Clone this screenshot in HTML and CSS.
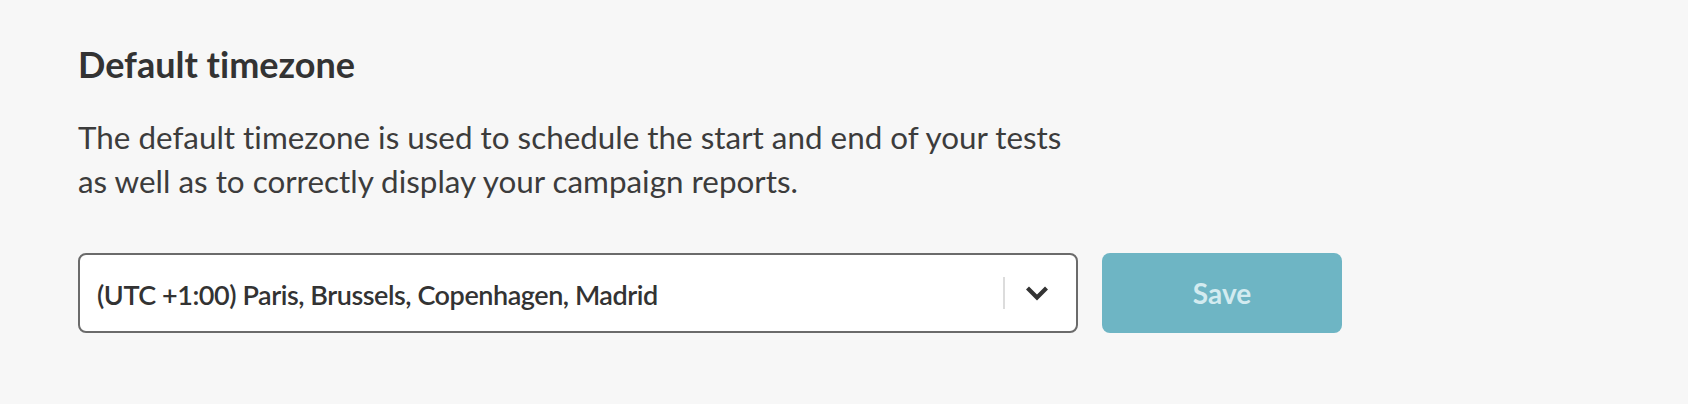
FILE: index.html
```html
<!DOCTYPE html>
<html lang="en">
<head>
<meta charset="utf-8">
<title>Default timezone</title>
<link rel="stylesheet" href="styles.css">
</head>
<body>
  <section class="panel">
    <h2 class="title">Default timezone</h2>
    <p class="desc">The default timezone is used to schedule the start and end of your tests<br>as well as to correctly display your campaign reports.</p>
    <div class="row">
      <div class="select">
        <span class="value">(UTC +1:00) Paris, Brussels, Copenhagen, Madrid</span>
        <span class="sep"></span>
        <span class="arrow">
          <svg width="24" height="16" viewBox="0 0 24 16"><path d="M2.5 3 L12 12.5 L21.5 3" fill="none" stroke="#333" stroke-width="4.2"/></svg>
        </span>
      </div>
      <button class="save" type="button">Save</button>
    </div>
  </section>
</body>
</html>
```

FILE: styles.css
```css
html, body {
  margin: 0;
  padding: 0;
  background: #f7f7f7;
}

body {
  font-family: Lato, "Open Sans", sans-serif;
  font-variant-ligatures: none;
  font-feature-settings: "liga" 0;
  color: #333;
  width: 1688px;
  height: 404px;
}

.panel {
  padding: 43px 0 0 78px;
}

.title {
  margin: 0;
  font-size: 36px;
  font-weight: 700;
  line-height: 1.2;
  color: #333;
}

.desc {
  margin: 29px 0 0;
  font-size: 31.4px;
  line-height: 44px;
  color: #3c3c3c;
}

.row {
  display: flex;
  align-items: center;
  margin-top: 50px;
}

.select {
  display: flex;
  align-items: center;
  box-sizing: border-box;
  width: 1000px;
  height: 80px;
  border: 2px solid #6b6b6b;
  border-radius: 8px;
  background: #fff;
}

.value {
  flex: 1;
  padding-left: 17px;
  padding-top: 2px;
  font-size: 27px;
  font-weight: 600;
  letter-spacing: -0.45px;
  color: #333;
}

.sep {
  width: 2px;
  height: 32px;
  background: #dcdcdc;
}

.arrow {
  display: flex;
  align-items: center;
  padding: 0 27px 0 20px;
}

.arrow svg {
  display: block;
}

.save {
  box-sizing: border-box;
  width: 240px;
  height: 80px;
  margin-left: 24px;
  border: none;
  border-radius: 8px;
  background: #6eb5c4;
  color: #d3ebf0;
  font-family: Lato, "Open Sans", sans-serif;
  font-size: 28px;
  font-weight: 700;
  padding: 0;
}
```
